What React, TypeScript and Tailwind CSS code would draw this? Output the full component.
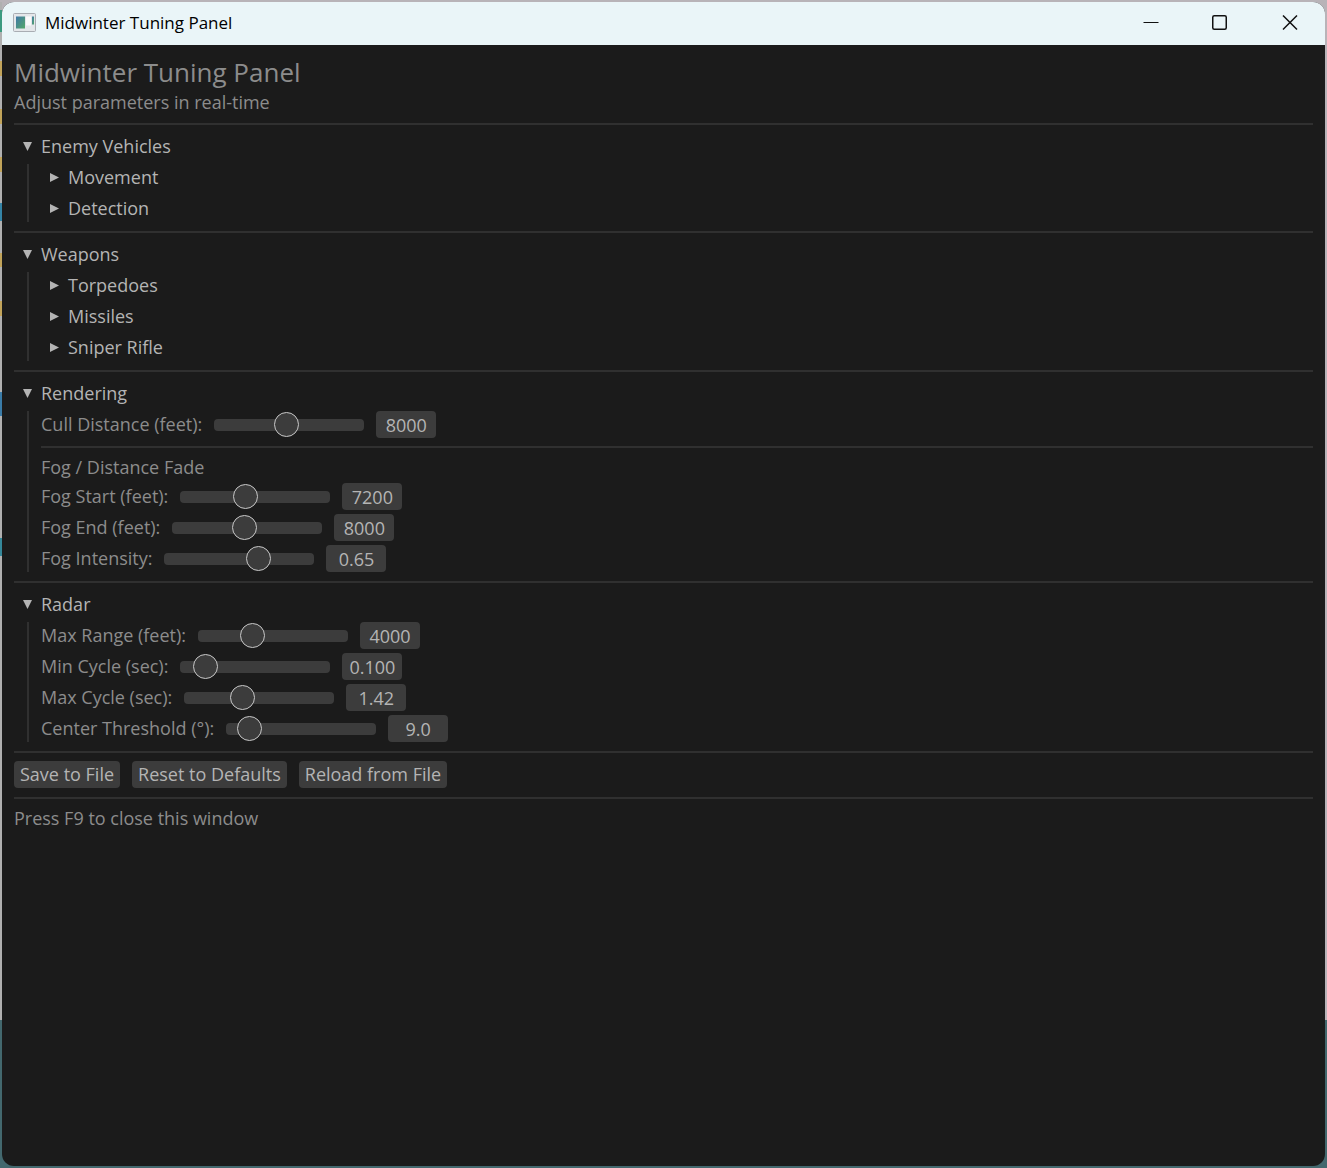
import { useState } from 'react';
import type { ReactNode } from 'react';

interface Param {
  id: string;
  label: string;
  min: number;
  max: number;
  value: number;
  digits: number;
}

const cullParams: Param[] = [
  { id: 'cull-distance', label: 'Cull Distance (feet):', min: 1000, max: 15700, value: 8000, digits: 0 },
];

const fogParams: Param[] = [
  { id: 'fog-start', label: 'Fog Start (feet):', min: 1000, max: 15600, value: 7200, digits: 0 },
  { id: 'fog-end', label: 'Fog End (feet):', min: 1000, max: 15600, value: 8000, digits: 0 },
  { id: 'fog-intensity', label: 'Fog Intensity:', min: 0, max: 1, value: 0.65, digits: 2 },
];

const radarParams: Param[] = [
  { id: 'max-range', label: 'Max Range (feet):', min: 1000, max: 10000, value: 4000, digits: 0 },
  { id: 'min-cycle', label: 'Min Cycle (sec):', min: 0, max: 1, value: 0.1, digits: 3 },
  { id: 'max-cycle', label: 'Max Cycle (sec):', min: 0.5, max: 3, value: 1.42, digits: 2 },
  { id: 'center-threshold', label: 'Center Threshold (°):', min: 5, max: 50, value: 9, digits: 1 },
];

function Arrow({ open }: { open: boolean }) {
  return (
    <svg viewBox="0 0 10 10" className="w-[10px] h-[10px] fill-[#b4b4b4]" aria-hidden="true">
      {open ? <path d="M0 0h9L4.5 9z" /> : <path d="M0 0v9L9 4.5z" />}
    </svg>
  );
}

function Collapsing({ title, defaultOpen = false, children }: { title: string; defaultOpen?: boolean; children?: ReactNode }) {
  const [open, setOpen] = useState(defaultOpen);

  return (
    <section className="flex flex-col gap-1">
      <button
        type="button"
        aria-expanded={open}
        onClick={() => setOpen(!open)}
        className="flex items-center self-start h-[27px] text-[#b4b4b4] hover:text-white"
      >
        <span className="flex justify-center w-[27px]">
          <Arrow open={open} />
        </span>
        {title}
      </button>
      {open && children && (
        <div className="flex flex-col gap-1 ml-[13px] pl-3 border-l-2 border-[#303030]">{children}</div>
      )}
    </section>
  );
}

function Separator() {
  return <hr className="mt-[9px] mb-2 border-0 h-[2px] bg-[#303030]" />;
}

function SliderRow({ param }: { param: Param }) {
  const [value, setValue] = useState(param.value);

  return (
    <div className="flex items-center gap-3 h-[27px]">
      <label htmlFor={param.id}>{param.label}</label>
      <input
        id={param.id}
        type="range"
        min={param.min}
        max={param.max}
        step="any"
        value={value}
        onChange={(e) => setValue(Number(e.target.value))}
        className="w-[150px] h-3 rounded bg-[#3c3c3c] appearance-none [&::-webkit-slider-thumb]:appearance-none [&::-webkit-slider-thumb]:size-[25px] [&::-webkit-slider-thumb]:rounded-full [&::-webkit-slider-thumb]:bg-[#3c3c3c] [&::-webkit-slider-thumb]:border [&::-webkit-slider-thumb]:border-[#c8c8c8]"
      />
      <input
        type="text"
        aria-label={`${param.label} value`}
        value={value.toFixed(param.digits)}
        onChange={(e) => setValue(Number(e.target.value) || 0)}
        className="w-[60px] h-[27px] rounded bg-[#3c3c3c] text-center text-[#b4b4b4]"
      />
    </div>
  );
}

function PanelButton({ children }: { children: ReactNode }) {
  return (
    <button type="button" className="h-[27px] px-[6px] rounded bg-[#3c3c3c] text-[#b4b4b4] hover:bg-[#464646]">
      {children}
    </button>
  );
}

function TitleBar() {
  return (
    <header className="flex items-center h-[43px] pl-[11px] pb-[2px] bg-[#eaf5f8] text-black">
      <svg viewBox="0 0 23 19" className="w-[23px] h-[19px]" aria-hidden="true">
        <defs>
          <linearGradient id="app-icon" x1="0" y1="0" x2="1" y2="1">
            <stop offset="0" stopColor="#3f78a8" />
            <stop offset="1" stopColor="#55a868" />
          </linearGradient>
        </defs>
        <rect x="0.5" y="0.5" width="22" height="18" rx="1" fill="#e4e7ea" stroke="#a9adb3" />
        <rect x="3" y="3.5" width="9" height="12" fill="url(#app-icon)" />
        <rect x="13" y="3.5" width="5" height="9" fill="#fafafa" />
        <rect x="19" y="3.5" width="2" height="8" fill="url(#app-icon)" />
      </svg>
      <span className="ml-[9px] text-[17px] font-['Open_Sans','Noto_Sans',sans-serif]">Midwinter Tuning Panel</span>
      <div className="flex ml-auto h-full">
        <button type="button" aria-label="Minimize" className="flex items-center justify-center w-[69px]">
          <svg viewBox="0 0 16 16" className="size-4" fill="none" stroke="#111" aria-hidden="true">
            <path d="M0.5 7.5h15" />
          </svg>
        </button>
        <button type="button" aria-label="Maximize" className="flex items-center justify-center w-[69px]">
          <svg viewBox="0 0 16 16" className="size-4" fill="none" stroke="#111" strokeWidth="1.5" aria-hidden="true">
            <rect x="0.75" y="0.75" width="13.5" height="13.5" rx="1.5" />
          </svg>
        </button>
        <button type="button" aria-label="Close" className="flex items-center justify-center w-[71px]">
          <svg viewBox="0 0 16 16" className="size-4" fill="none" stroke="#111" strokeWidth="1.5" aria-hidden="true">
            <path d="M1 0.5l14 14M15 0.5l-14 14" />
          </svg>
        </button>
      </div>
    </header>
  );
}

export default function App() {
  return (
    <div className="flex min-h-screen py-[2px] pr-[2px] bg-[linear-gradient(#b8b3b8_0_1020px,#43686e_1020px)]">
      {/* sliver of the desktop left of the window */}
      <div className="w-[2px] bg-[linear-gradient(#b0b0b0_0_8px,#3b9a80_8px_30px,#b0b0b0_30px_59px,#c2a45a_59px_74px,#b0b0b0_74px_107px,#c2a45a_107px_122px,#b0b0b0_122px_155px,#c2a45a_155px_170px,#b0b0b0_170px_201px,#3484a6_201px_219px,#b0b0b0_219px_251px,#c2a45a_251px_265px,#b0b0b0_265px_299px,#c2a45a_299px_314px,#b0b0b0_314px_390px,#3a7ca8_390px_414px,#b0b0b0_414px_536px,#35889a_536px_554px,#b0b0b0_554px_1018px,#43686e_1018px)]" />
      <div className="flex flex-col flex-1 min-w-0 rounded-xl overflow-hidden bg-[#1b1b1b]">
        <TitleBar />
        <main className="flex flex-col p-3 font-['Open_Sans','Noto_Sans',sans-serif] text-[18px] leading-[23px] text-[#8c8c8c]">
          <h1 className="mb-1 text-[26px] leading-[30px]">Midwinter Tuning Panel</h1>
          <p>Adjust parameters in real-time</p>
          <Separator />

          <Collapsing title="Enemy Vehicles" defaultOpen>
            <Collapsing title="Movement" />
            <Collapsing title="Detection" />
          </Collapsing>
          <Separator />

          <Collapsing title="Weapons" defaultOpen>
            <Collapsing title="Torpedoes" />
            <Collapsing title="Missiles" />
            <Collapsing title="Sniper Rifle" />
          </Collapsing>
          <Separator />

          <Collapsing title="Rendering" defaultOpen>
            {cullParams.map((p) => (
              <SliderRow key={p.id} param={p} />
            ))}
            <hr className="my-1 border-0 h-[2px] bg-[#303030]" />
            <h2>Fog / Distance Fade</h2>
            {fogParams.map((p) => (
              <SliderRow key={p.id} param={p} />
            ))}
          </Collapsing>
          <Separator />

          <Collapsing title="Radar" defaultOpen>
            {radarParams.map((p) => (
              <SliderRow key={p.id} param={p} />
            ))}
          </Collapsing>
          <Separator />

          <div className="flex flex-wrap gap-3">
            <PanelButton>Save to File</PanelButton>
            <PanelButton>Reset to Defaults</PanelButton>
            <PanelButton>Reload from File</PanelButton>
          </div>
          <Separator />

          <p>Press F9 to close this window</p>
        </main>
      </div>
    </div>
  );
}
